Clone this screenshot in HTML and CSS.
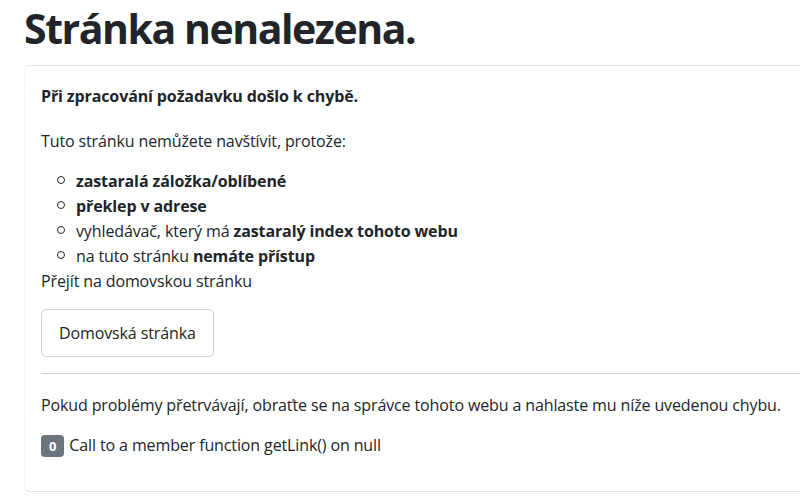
FILE: index.html
```html
<!DOCTYPE html>
<html lang="cs">
<head>
  <meta charset="UTF-8" />
  <title>Stránka nenalezena.</title>
  <link rel="stylesheet" href="styles.css">
</head>
<body>
  <h1 class="page-title">Stránka nenalezena.</h1>

  <div class="card">
    <div class="card-body">
      <p class="lead-error"><strong>Při zpracování požadavku došlo k chybě.</strong></p>
      <p>Tuto stránku nemůžete navštívit, protože:</p>
      <ul class="reasons">
        <li><strong>zastaralá záložka/oblíbené</strong></li>
        <li><strong>překlep v adrese</strong></li>
        <li>vyhledávač, který má <strong>zastaralý index tohoto webu</strong></li>
        <li>na tuto stránku <strong>nemáte přístup</strong></li>
      </ul>
      <p class="go-home">Přejít na domovskou stránku</p>
      <p><a class="btn" href="#">Domovská stránka</a></p>

      <hr>

      <p>Pokud problémy přetrvávají, obraťte se na správce tohoto webu a nahlaste mu níže uvedenou chybu.</p>
      <p class="error-msg"><span class="badge">0</span> Call to a member function getLink() on null</p>
    </div>
  </div>
</body>
</html>
```

FILE: styles.css
```css
* {
  box-sizing: border-box;
}

html, body {
  overflow: hidden;
}

body {
  margin: 0;
  padding: 0 0 0 24px;
  background-color: #fff;
  color: #212529;
  font-family: "Open Sans", "Noto Sans", sans-serif;
  font-size: 16px;
  line-height: 1.5;
  letter-spacing: -0.12px;
}

.page-title {
  margin: 0;
  padding-top: 4px;
  font-size: 41px;
  font-weight: 700;
  line-height: 1.2;
  color: #212529;
  letter-spacing: -1.45px;
}

.card {
  margin-top: 12px;
  margin-right: -40px;
  border: 1px solid #e2e2e6;
  border-left-color: #f6f6f8;
  border-right: none;
  border-radius: 6px 0 0 6px;
}

.card-body {
  padding: 18px 16px 0 16px;
}

p {
  margin: 0 0 16px 0;
}

.lead-error {
  margin-bottom: 21px;
}

.reasons {
  margin: 0;
  padding-left: 33px;
  list-style: none;
}

.reasons li {
  line-height: 25px;
}

.reasons li::before {
  content: "";
  display: inline-block;
  width: 6px;
  height: 6px;
  margin-left: -17px;
  margin-right: 11px;
  border: 1px solid #212529;
  border-radius: 50%;
  vertical-align: 3px;
}

.go-home {
  margin-bottom: 16px;
}

.btn {
  display: inline-block;
  padding: 11px 17px;
  border: 1px solid #d0d0d4;
  border-radius: 5px;
  color: #212529;
  text-decoration: none;
}

hr {
  margin: 0 0 19px 0;
  border: none;
  border-top: 1px solid #cfcfcf;
}

.error-msg {
  margin-bottom: 34px;
}

.badge {
  display: inline-block;
  padding: 2px 8px;
  border-radius: 4px;
  background-color: #6c757d;
  color: #fff;
  font-size: 13px;
  font-weight: 700;
  line-height: 18px;
  vertical-align: 0;
  margin-right: 1px;
}
```
